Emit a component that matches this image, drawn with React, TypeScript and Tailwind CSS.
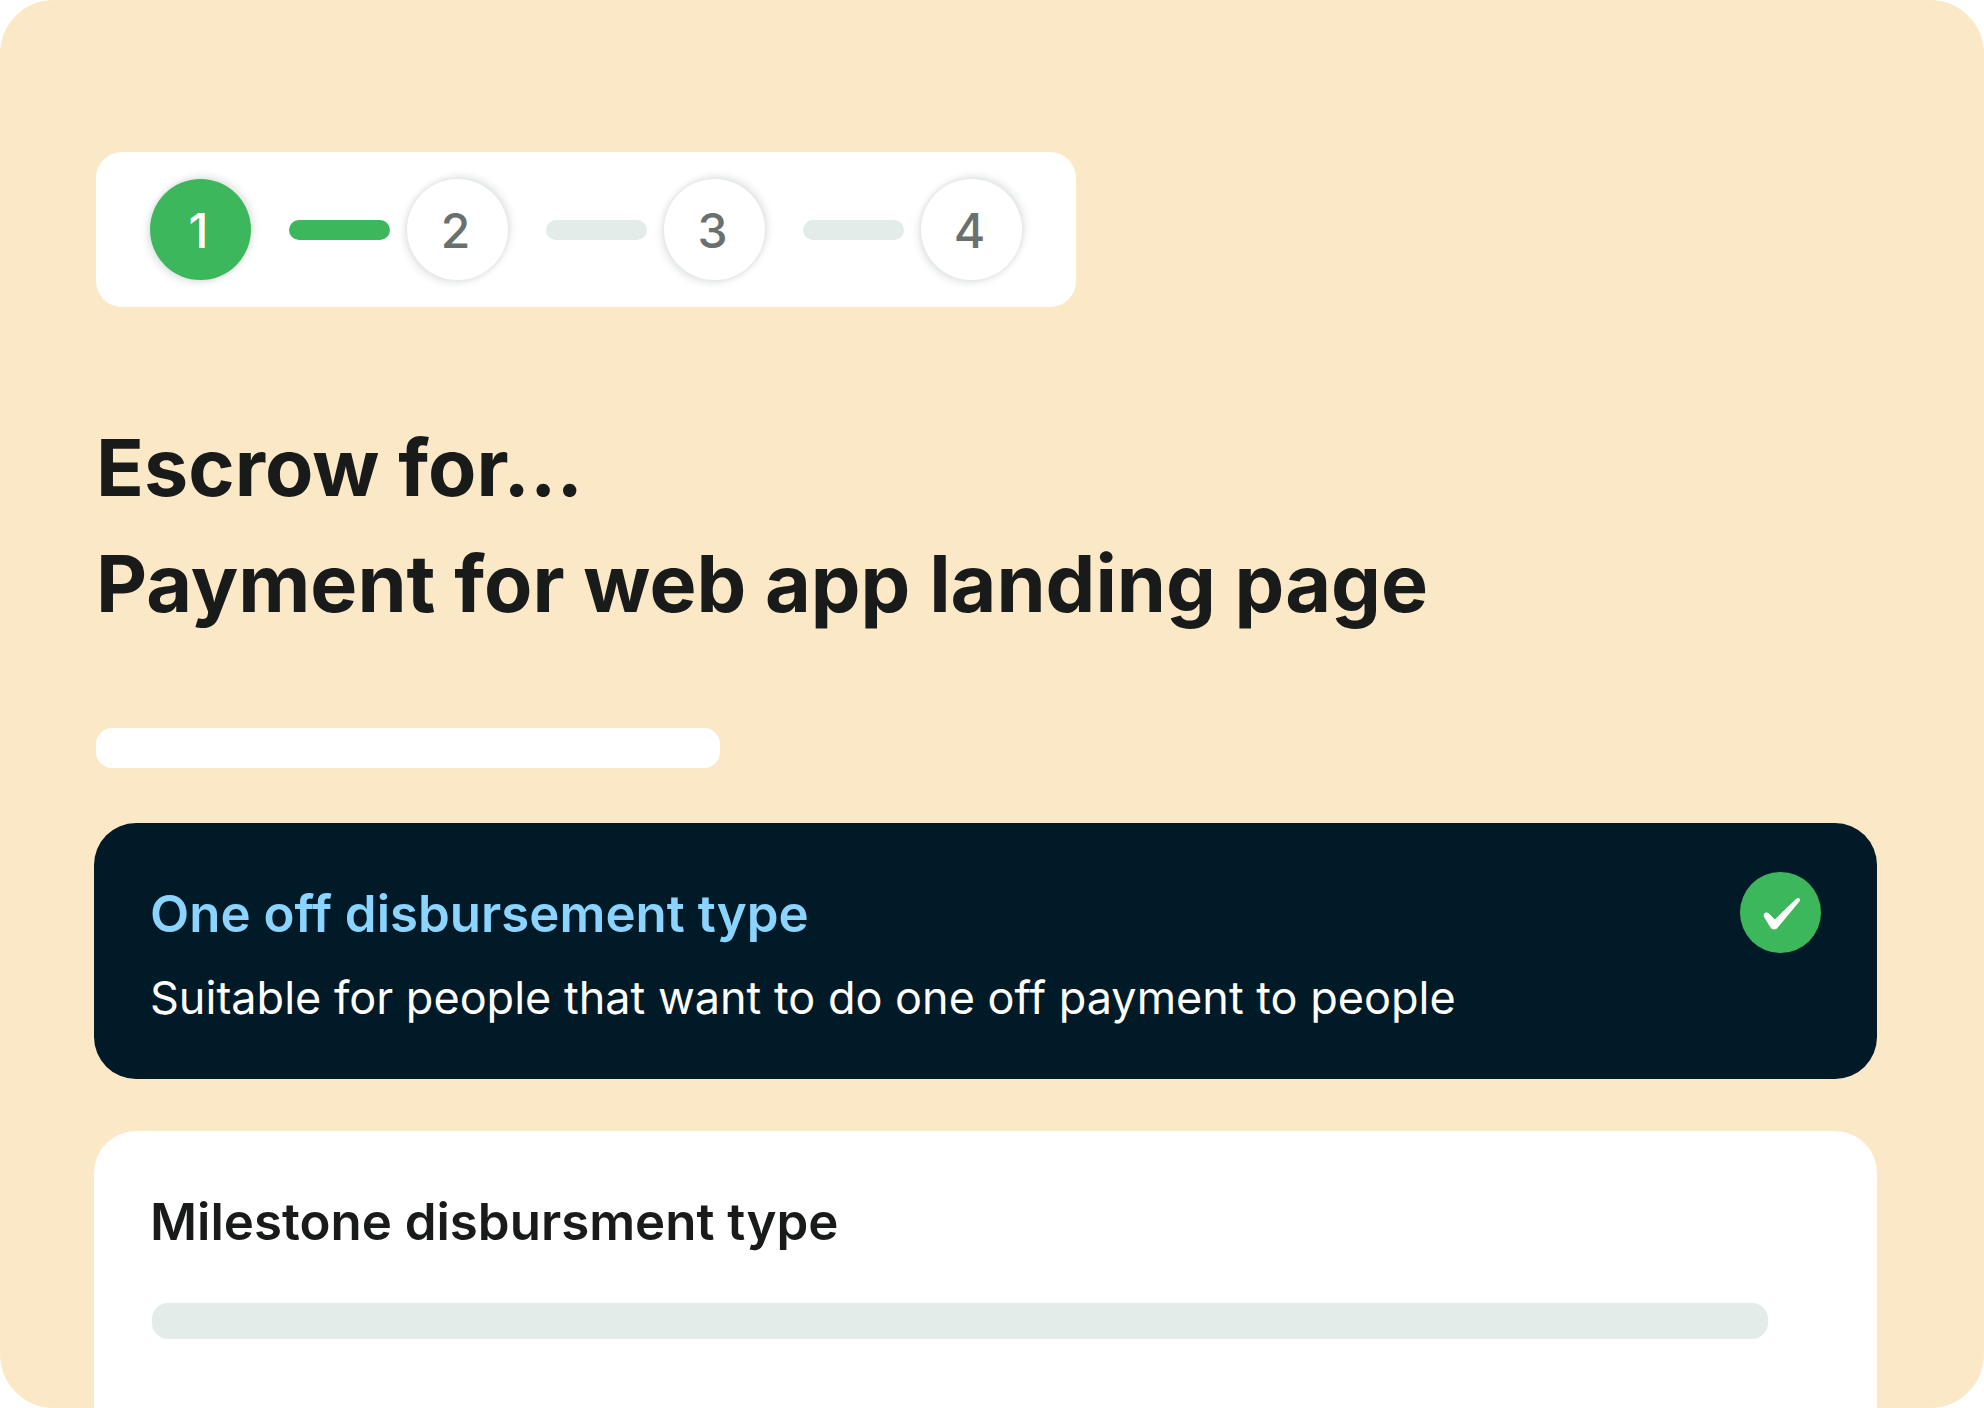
import { Fragment, useState } from "react";

const STEPS = [1, 2, 3, 4];

function Stepper({ current }: { current: number }) {
  return (
    <nav aria-label="Progress" className="ml-0.5 self-start rounded-[26px] bg-white px-[54px] py-[27px]">
      <ol className="flex items-center">
        {STEPS.map((step) => (
          <Fragment key={step}>
            {step > 1 && (
              <li
                aria-hidden="true"
                className={`ml-[38px] mr-[17px] h-5 w-[101px] rounded-full ${
                  step - 1 <= current ? "bg-[#3cb75c]" : "bg-[#e3ece8]"
                }`}
              />
            )}
            <li>
              <button
                type="button"
                aria-current={step === current ? "step" : undefined}
                className={`flex size-[101px] items-center justify-center rounded-full pr-1 pt-0.5 text-5xl font-medium shadow-[3px_-3px_7px_rgba(50,70,62,0.13),-3px_3px_7px_rgba(50,70,62,0.13)] ${
                  step === current ? "bg-[#3cb75c] text-white" : "bg-white text-[#69706e]"
                }`}
              >
                {step}
              </button>
            </li>
          </Fragment>
        ))}
      </ol>
    </nav>
  );
}

function CheckBadge() {
  return (
    <svg viewBox="0 0 81 81" className="size-[81px] shrink-0" aria-hidden="true">
      <circle cx="40.5" cy="40.5" r="40.5" fill="#3cb75c" />
      <path
        fill="#fff"
        d="M29.2 41.8L34.8 47.4L56 27.1C57.2 26 58.3 25.7 59.3 26.4C60.4 27.2 60.2 28.6 59.2 29.8L37.4 55.9C35.7 57.9 32.2 57.9 30.7 55.7L24.3 45.6C23.3 44 23.5 41.8 25 40.9C26.4 40 28 40.6 29.2 41.8Z"
      />
    </svg>
  );
}

export default function App() {
  const [kind, setKind] = useState("one-off");

  return (
    <main className="flex min-h-screen flex-col rounded-[54px] bg-[#fbe8c7] pl-[94px] pr-[107px] pt-[152px] font-[Inter,sans-serif] text-[#191b1a]">
      <Stepper current={1} />

      <h1 className="ml-0.5 mt-[102px] text-[79px] font-bold leading-[116px]">
        Escrow for...
        <br />
        Payment for web app landing page
      </h1>

      <div className="ml-0.5 mt-[87px] h-10 w-[624px] rounded-2xl bg-white" />

      <label className="mt-[55px] flex min-h-64 cursor-pointer items-start justify-between rounded-[42px] bg-[#011a27] px-14 pt-[49px] pb-[38px]">
        <input
          type="radio"
          name="disbursement"
          className="sr-only"
          checked={kind === "one-off"}
          onChange={() => setKind("one-off")}
        />
        <span className="flex flex-col">
          <span className="text-[51px] font-semibold leading-[84px] text-[#8ad4ff]">One off disbursement type</span>
          <span className="text-[45px] leading-[84px] text-white">
            Suitable for people that want to do one off payment to people
          </span>
        </span>
        <CheckBadge />
      </label>

      <label className="mt-[52px] flex grow cursor-pointer flex-col rounded-t-[42px] bg-white pl-14 pr-[109px] pt-[49px]">
        <input
          type="radio"
          name="disbursement"
          className="sr-only"
          checked={kind === "milestone"}
          onChange={() => setKind("milestone")}
        />
        <span className="text-[51px] font-semibold leading-[84px]">Milestone disbursment type</span>
        <span className="ml-0.5 mt-[39px] h-9 rounded-2xl bg-[#e3ece8]" />
      </label>
    </main>
  );
}
